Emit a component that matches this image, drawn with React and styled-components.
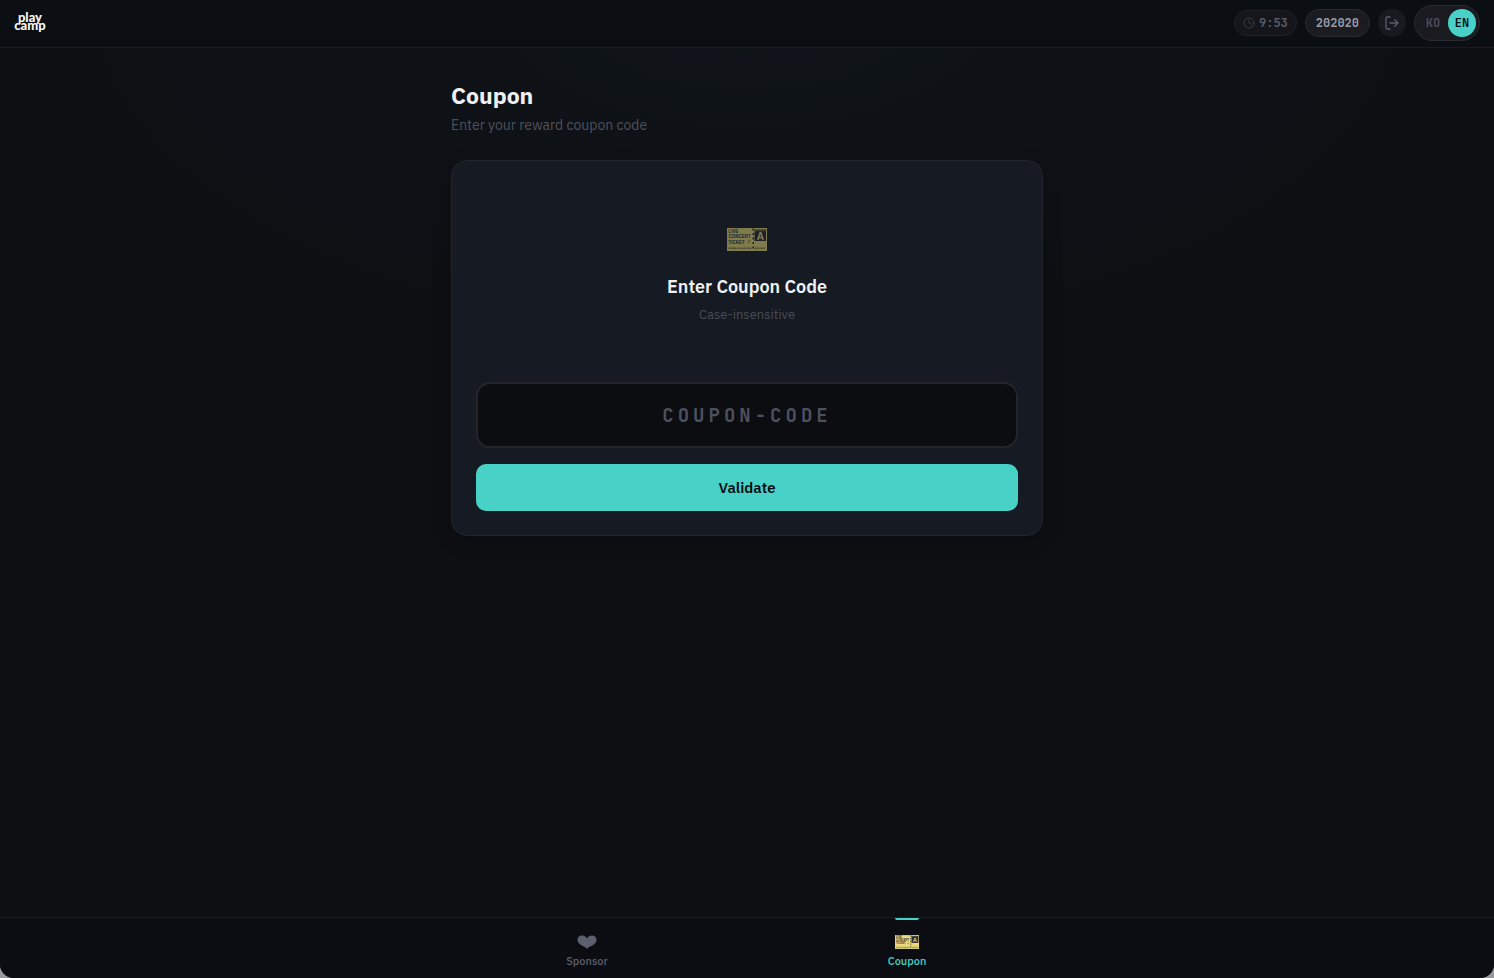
import React, { useState } from "react";
import styled, { createGlobalStyle, css } from "styled-components";

const sans = '"IBM Plex Sans", Roboto, "Noto Sans", sans-serif';
const mono = '"JetBrains Mono", "IBM Plex Mono", "Liberation Mono", monospace';
const teal = "#48d1c7";

const GlobalStyle = createGlobalStyle`
  * { box-sizing: border-box; }
  body { margin: 0; background: #98999b; font-family: ${sans}; -webkit-font-smoothing: antialiased; }
  button, input { font-family: inherit; margin: 0; }
  h1, h2, p { margin: 0; }
`;

const Page = styled.div`
  min-height: 100vh;
  display: flex;
  flex-direction: column;
  overflow: hidden;
  border-radius: 0 0 14px 14px;
  color: #eff0f3;
  background:
    radial-gradient(ellipse 45% 35% at 50% 0%, rgba(40, 80, 100, 0.09), transparent),
    #0d0f13;
`;

const Header = styled.header`
  height: 48px;
  padding: 0 14px 1px;
  display: flex;
  align-items: center;
  justify-content: space-between;
  background: #0b0e12;
  border-bottom: 1px solid #181b20;
`;

const Logo = styled.a`
  display: block;
  width: 32px;
  height: 22px;
  svg { display: block; }
  text { font: 900 13px Lato, sans-serif; fill: #f4f4f5; text-anchor: middle; }
`;

const Tools = styled.div`
  display: flex;
  align-items: center;
  gap: 8px;
`;

const Pill = styled.div`
  height: ${(p) => (p.$strong ? 28 : 26)}px;
  padding: 0 ${(p) => (p.$strong ? 10 : 8)}px;
  display: flex;
  align-items: center;
  gap: 4px;
  border: 1px solid ${(p) => (p.$strong ? "#2b2c33" : "#202227")};
  border-radius: 14px;
  background: ${(p) => (p.$strong ? "#1b1c22" : "#14161b")};
  color: ${(p) => (p.$strong ? "#9a9aa7" : "#5b5c69")};
  font: 600 12px ${mono};
  svg { display: block; color: #393b45; }
`;

const IconButton = styled.button`
  width: 28px;
  height: 28px;
  padding: 0;
  display: grid;
  place-items: center;
  border: 0;
  border-radius: 50%;
  background: #181a1f;
  color: #5b5c69;
  svg { display: block; }
`;

const Languages = styled.div`
  height: 36px;
  padding: 3px;
  display: flex;
  align-items: center;
  border: 1px solid #2a2b31;
  border-radius: 18px;
  background: #1a1b20;
`;

const Language = styled.button`
  width: ${(p) => (p.$active ? 28 : 30)}px;
  height: 28px;
  padding: 0;
  border: 0;
  border-radius: 14px;
  background: ${(p) => (p.$active ? teal : "transparent")};
  color: ${(p) => (p.$active ? "#0b1013" : "#4b4c59")};
  font: 600 12px ${mono};
`;

const Main = styled.main`
  flex: 1;
  width: 100%;
  max-width: 640px;
  margin: 0 auto;
  padding: 32px 24px;
`;

const Title = styled.h1`
  font-size: 23px;
  line-height: 30px;
  font-weight: 700;
`;

const Subtitle = styled.p`
  margin-top: 5px;
  color: #4d505c;
  font-size: 14px;
  line-height: 20px;
`;

const Card = styled.form`
  margin-top: 25px;
  padding: 24px;
  display: flex;
  flex-direction: column;
  gap: 16px;
  border: 1px solid #22252d;
  border-radius: 16px;
  background: #161a22;
  box-shadow: 0 4px 20px rgba(0, 0, 0, 0.2);
`;

const Intro = styled.div`
  padding: 43px 24px 41px;
  display: flex;
  flex-direction: column;
  align-items: center;
`;

const Ticket = styled.svg`
  display: block;
  width: ${(p) => p.$width}px;
  height: ${(p) => p.$height}px;
  opacity: ${(p) => (p.$dim ? 0.5 : 1)};
  text { font-family: "Liberation Sans", sans-serif; font-weight: 700; }
`;

const IntroTitle = styled.h2`
  margin-top: 24px;
  font-size: 18px;
  line-height: 24px;
  font-weight: 600;
`;

const Hint = styled.p`
  margin-top: 6px;
  color: #484c58;
  font-size: 13px;
  line-height: 20px;
`;

const CodeInput = styled.input`
  width: 100%;
  height: 66px;
  padding: 0 16px;
  border: 2px solid #23252a;
  border-radius: 14px;
  outline: 0;
  background: #0c0d11;
  color: #eff0f3;
  text-align: center;
  text-transform: uppercase;
  font: 600 19px ${mono};
  letter-spacing: 4px;
  &::placeholder { color: #4d505f; opacity: 1; }
`;

const SubmitButton = styled.button`
  height: 47px;
  border: 0;
  border-radius: 10px;
  background: ${teal};
  color: #0a0d11;
  font-size: 15px;
  font-weight: 600;
`;

const TabBar = styled.nav`
  height: 61px;
  display: flex;
  justify-content: center;
  background: #0b0d12;
  border-top: 1px solid #1a1c21;
`;

const Tab = styled.a`
  position: relative;
  width: 320px;
  padding-top: 16px;
  display: flex;
  flex-direction: column;
  align-items: center;
  gap: 3px;
  color: ${(p) => (p.$active ? teal : "#5c5f6e")};
  font-size: 11px;
  line-height: 16px;
  font-weight: 500;
  text-decoration: none;
  ${(p) =>
    p.$active &&
    css`
      &::before {
        content: "";
        position: absolute;
        top: 0;
        left: 50%;
        width: 24px;
        height: 2px;
        margin-left: -12px;
        border-radius: 0 0 2px 2px;
        background: ${teal};
      }
    `}
`;

const TabIcon = styled.span`
  height: 16px;
  display: grid;
  place-items: center;
  svg { display: block; }
`;

function TicketIcon({ width, height, dim }) {
  return (
    <Ticket $width={width} $height={height} $dim={dim} viewBox="0 0 80 46" aria-hidden="true">
      <rect width="80" height="46" fill="#eadb78" />
      <rect x="55" y="3" width="23" height="23" fill="#242832" />
      <path d="M56 5.500H77" stroke="#8f8850" strokeWidth="2" strokeDasharray="4 1" />
      <path d="M52.500 1V46" stroke="#20242c" strokeWidth="3" strokeDasharray="4 5" />
      <g fill="#2d3035">
        <text x="3" y="10" fontSize="9">LIVE</text>
        <text x="3" y="20" fontSize="9">CONCERT</text>
        <text x="3" y="31" fontSize="9">TICKET</text>
      </g>
      <path d="M41 30l2-5 3-1-3 5 3 1" fill="none" stroke="#8a7e42" strokeWidth="1.300" />
      <path d="M3 40.500H49M56 40.500H77" stroke="#6c673f" strokeWidth="3" strokeDasharray="2 1 3 1 1 1" />
      <text x="66.500" y="24" fontSize="20" textAnchor="middle" fill="#f2df75">A</text>
    </Ticket>
  );
}

function ClockIcon() {
  return (
    <svg width="12" height="12" viewBox="0 0 24 24" fill="none" stroke="currentColor" strokeWidth="2" strokeLinecap="round" strokeLinejoin="round" aria-hidden="true">
      <circle cx="12" cy="12" r="10" />
      <path d="M12 6v6l4 2" />
    </svg>
  );
}

function ExitIcon() {
  return (
    <svg width="16" height="16" viewBox="0 0 24 24" fill="none" stroke="currentColor" strokeWidth="2" strokeLinecap="round" strokeLinejoin="round" aria-hidden="true">
      <path d="M9 21H5a2 2 0 0 1-2-2V5a2 2 0 0 1 2-2h4" />
      <path d="M16 17l5-5-5-5M21 12H9" />
    </svg>
  );
}

function HeartIcon() {
  return (
    <svg width="20" height="14" viewBox="0 0 20 14" fill="currentColor" aria-hidden="true">
      <path d="M10 14C8.500 11.800 5.500 11.300 3.200 9.500 1.500 8.200.5 6.700.5 4.800.5 2.200 2.400.4 5 .4c2.300 0 4.200 1.100 5 3 .8-1.900 2.700-3 5-3 2.600 0 4.500 1.800 4.500 4.400 0 1.900-1 3.400-2.700 4.700C14.500 11.300 11.500 11.800 10 14Z" />
    </svg>
  );
}

export default function App() {
  const [language, setLanguage] = useState("EN");
  const [code, setCode] = useState("");

  return (
    <>
      <GlobalStyle />
      <Page>
        <Header>
          <Logo href="#home" aria-label="Playcamp home">
            <svg width="32" height="22" viewBox="0 0 32 22" overflow="visible">
              <text>
                <tspan x="16" y="10">play</tspan>
                <tspan x="16" y="18">camp</tspan>
              </text>
            </svg>
          </Logo>
          <Tools>
            <Pill><ClockIcon />9:53</Pill>
            <Pill $strong>202020</Pill>
            <IconButton type="button" aria-label="Log out"><ExitIcon /></IconButton>
            <Languages role="group" aria-label="Language">
              {["KO", "EN"].map((name) => (
                <Language key={name} type="button" $active={name === language} aria-pressed={name === language} onClick={() => setLanguage(name)}>
                  {name}
                </Language>
              ))}
            </Languages>
          </Tools>
        </Header>
        <Main>
          <Title>Coupon</Title>
          <Subtitle>Enter your reward coupon code</Subtitle>
          <Card onSubmit={(event) => event.preventDefault()}>
            <Intro>
              <TicketIcon width={40} height={23} dim />
              <IntroTitle>Enter Coupon Code</IntroTitle>
              <Hint>Case-insensitive</Hint>
            </Intro>
            <CodeInput aria-label="Coupon code" placeholder="COUPON-CODE" value={code} onChange={(event) => setCode(event.target.value)} />
            <SubmitButton type="submit">Validate</SubmitButton>
          </Card>
        </Main>
        <TabBar>
          <Tab href="#sponsor">
            <TabIcon><HeartIcon /></TabIcon>
            Sponsor
          </Tab>
          <Tab href="#coupon" $active aria-current="page">
            <TabIcon><TicketIcon width={24} height={14} /></TabIcon>
            Coupon
          </Tab>
        </TabBar>
      </Page>
    </>
  );
}
